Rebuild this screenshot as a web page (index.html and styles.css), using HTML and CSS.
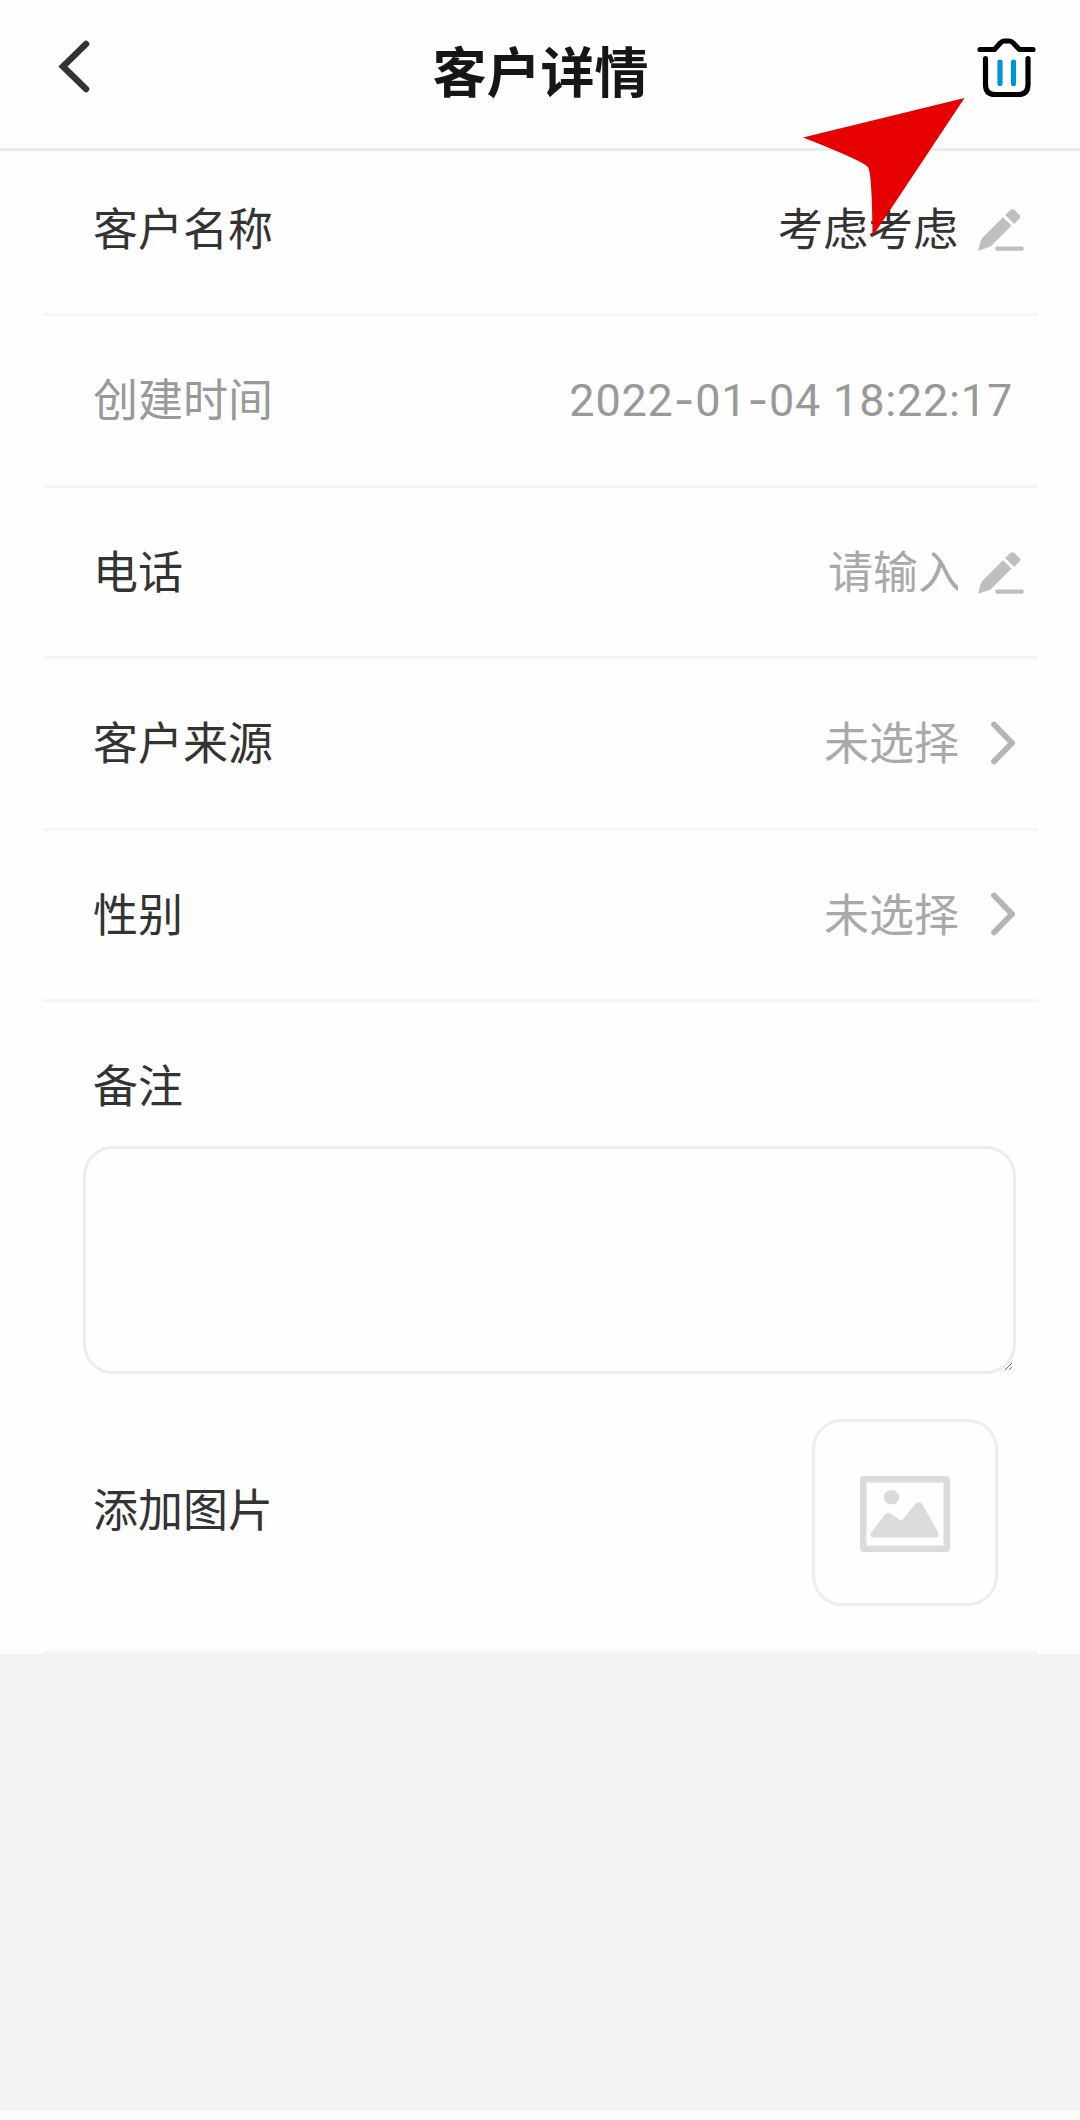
FILE: index.html
```html
<!DOCTYPE html>
<html lang="zh-CN">
<head>
    <meta charset="UTF-8">
    <meta name="viewport" content="width=device-width, initial-scale=1.0">
    <title>客户详情</title>
    <link rel="stylesheet" href="styles.css">
</head>
<body>

    <header class="header">
        <svg class="back-icon" viewBox="0 0 32 54">
            <path d="M28 4 L5 26.5 L28 49" />
        </svg>
        <h1>客户详情</h1>
        <svg class="delete-icon" viewBox="0 0 60 60">
            <path d="M3 11.5 H17.5 L23.5 4.8 Q25 3 27.5 3 H32 Q34.5 3 36 4.8 L42.5 11.5 H56" />
            <path d="M8.5 20.5 V46.5 Q8.5 56.5 18 56.5 H41.5 Q51 56.5 51 46.5 V20.5" />
            <path class="blue" d="M23 24 V45.5 M36.5 24 V45.5" />
        </svg>
        <svg class="pointer" viewBox="0 0 162 139">
            <path d="M161.5 0 L0 39.5 Q58 62 65 69 Q69 75 69.5 138.5 Z" />
        </svg>
    </header>

    <div class="form">
        <div class="row">
            <span class="label">客户名称</span>
            <span class="value">考虑考虑</span>
            <svg class="edit-icon" viewBox="0 0 136 124">
                <path d="M0 123 L7 97 Q9 89 14 84 L74 24 L99 49 L41 107 Q36 112 29 114 Z" />
                <path d="M80 18 L96 3 Q102 -2 108 3 L123 18 Q127 23 123 28 L107 44 Z" />
                <rect x="51" y="111" width="84" height="12" rx="5" />
            </svg>
        </div>

        <div class="row disabled">
            <span class="label">创建时间</span>
            <span class="value date">2022<span class="dash">-</span>01<span class="dash">-</span>04 18:22:17</span>
        </div>

        <div class="row">
            <span class="label">电话</span>
            <span class="value placeholder clipped">请输入</span>
            <svg class="edit-icon" viewBox="0 0 136 124">
                <path d="M0 123 L7 97 Q9 89 14 84 L74 24 L99 49 L41 107 Q36 112 29 114 Z" />
                <path d="M80 18 L96 3 Q102 -2 108 3 L123 18 Q127 23 123 28 L107 44 Z" />
                <rect x="51" y="111" width="84" height="12" rx="5" />
            </svg>
        </div>

        <div class="row">
            <span class="label">客户来源</span>
            <span class="value placeholder">未选择</span>
            <svg class="arrow-icon" viewBox="0 0 24 44">
                <path d="M3 3.5 L21 22 L3 40.5" />
            </svg>
        </div>

        <div class="row">
            <span class="label">性别</span>
            <span class="value placeholder">未选择</span>
            <svg class="arrow-icon" viewBox="0 0 24 44">
                <path d="M3 3.5 L21 22 L3 40.5" />
            </svg>
        </div>

        <div class="remark">
            <span class="label">备注</span>
            <textarea class="remark-input"></textarea>
        </div>

        <div class="row picture-row">
            <span class="label">添加图片</span>
            <div class="upload">
                <svg class="picture-icon" viewBox="0 0 90 76">
                    <rect class="frame" x="3.25" y="3.25" width="83.5" height="69.5" rx="0.5" />
                    <ellipse cx="31.5" cy="21.3" rx="7.7" ry="7.2" />
                    <path d="M11 57 L25 38.5 Q27.5 35.5 31 37.8 L41.5 45 L55 28.5 Q59 24 62.5 28.5 L78.5 57 Q79.5 61.5 75 61.5 H13.5 Q9 61 11 57 Z" />
                </svg>
            </div>
        </div>
    </div>

</body>
</html>
```
FILE: styles.css
```css
html {
    background-color: #fcfcfc;
}

body {
    font-family: 'Noto Sans CJK SC', sans-serif;
    margin: 0;
    padding: 0;
    height: 2111px;
    background-color: #f3f3f3;
    color: #333;
}

.header {
    position: relative;
    display: flex;
    align-items: flex-start;
    justify-content: space-between;
    box-sizing: border-box;
    height: 151px;
    margin-bottom: -6.5px;
    padding: 38px 43px 0 58px;
    background-color: #fefefe;
    border-bottom: 3px solid #ececec;
}

.header h1 {
    margin: 1px 0 0 14px;
    font-size: 54px;
    line-height: 62px;
    font-weight: bold;
    color: #161616;
}

.header svg,
.row svg {
    display: block;
    flex: none;
}

.back-icon {
    width: 32px;
    height: 54px;
    margin-top: 2px;
    fill: none;
    stroke: #333;
    stroke-width: 6.5;
    stroke-linecap: round;
}

.delete-icon {
    width: 60px;
    height: 60px;
    fill: none;
    stroke: #000;
    stroke-width: 5.2;
    stroke-linecap: round;
}

.delete-icon .blue {
    stroke: #0092d8;
}

/* red arrow that points at the delete button */
.header .pointer {
    position: absolute;
    top: 98px;
    left: 803px;
    width: 162px;
    height: 139px;
    fill: #e60000;
    z-index: 10;
}

.form {
    padding: 0 42px 0 43px;
    background-color: #fefefe;
}

.row {
    display: flex;
    align-items: center;
    box-sizing: border-box;
    height: 171.5px;
    padding-left: 50px;
    border-bottom: 3px solid #f5f5f5;
}

.label,
.value {
    font-size: 45px;
    line-height: 60px;
    margin-top: -4px;
}

.value {
    margin-left: auto;
}

.disabled {
    color: #999;
}

.date {
    font-family: Roboto, sans-serif;
    letter-spacing: 0.8px;
    margin-top: 1px;
    margin-right: 25px;
}

.date .dash {
    font-family: Inter, sans-serif;
}

.placeholder {
    color: #a9a9a9;
}

.clipped {
    width: 130px;
    overflow: hidden;
    white-space: nowrap;
}

.edit-icon {
    width: 46px;
    height: 42px;
    margin: 2px 14px 0 20px;
    fill: #bfbfbf;
}

.arrow-icon {
    width: 24px;
    height: 44px;
    margin: -1px 23px 0 32px;
    fill: none;
    stroke: #b5b5b5;
    stroke-width: 5.8;
    stroke-linecap: round;
}

.remark {
    padding: 52px 22px 0 40px;
}

.remark .label {
    display: block;
    margin: 0 0 32px 10px;
}

.remark-input {
    display: block;
    box-sizing: border-box;
    width: 933px;
    height: 228px;
    padding: 20px;
    border: 3px solid #ececec;
    border-radius: 30px;
    outline: none;
    background-color: #fefefe;
    font-size: 45px;
}

.picture-row {
    height: 280px;
    padding-right: 40px;
}

.picture-row .label {
    margin-top: -9px;
}

.upload {
    display: flex;
    align-items: center;
    justify-content: center;
    box-sizing: border-box;
    width: 186px;
    height: 187px;
    margin-left: auto;
    border: 3px solid #eee;
    border-radius: 30px;
}

.picture-icon {
    width: 90px;
    height: 76px;
    margin-top: 3px;
    fill: #dbdbdb;
}

.picture-icon .frame {
    fill: none;
    stroke: #dbdbdb;
    stroke-width: 6.5;
}
```
